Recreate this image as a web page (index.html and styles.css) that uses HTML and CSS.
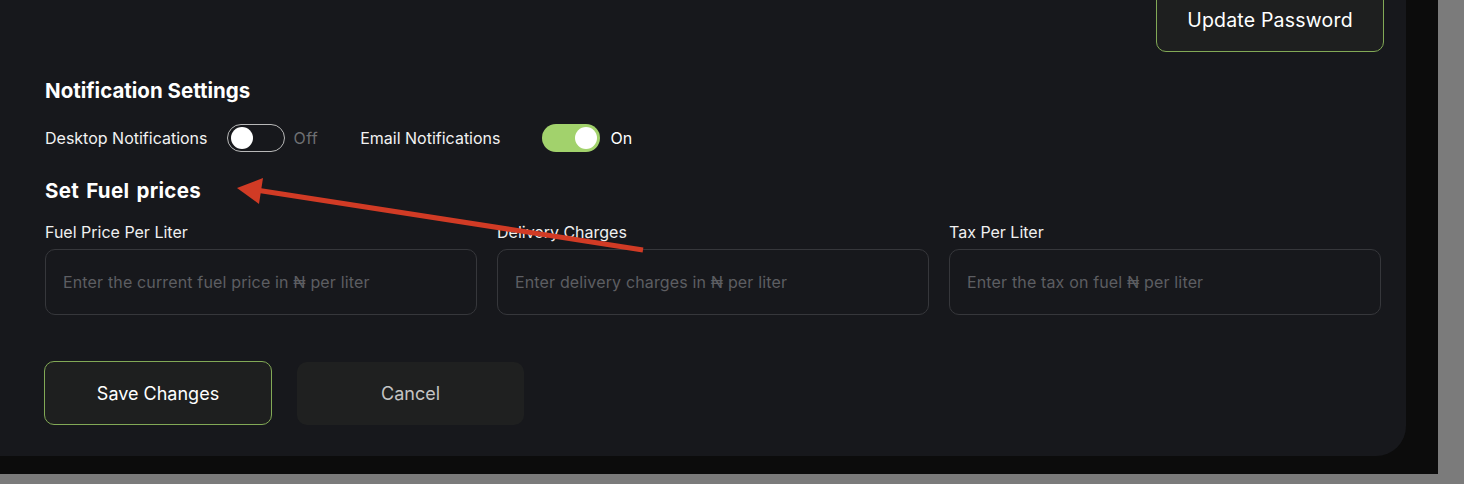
FILE: index.html
```html
<!DOCTYPE html>
<html>
<head>
<meta charset="utf-8">
<link rel="stylesheet" href="styles.css">
</head>
<body>
<div class="frame">
  <div class="card">
    <div class="top-row">
      <button class="btn btn-outline btn-top">Update Password</button>
    </div>
    <h2 class="heading h-notif">Notification Settings</h2>
    <div class="toggles">
      <span class="t-label">Desktop Notifications</span>
      <span class="switch off"><span class="knob"></span></span>
      <span class="state state-off">Off</span>
      <span class="t-label t-email">Email Notifications</span>
      <span class="switch on"><span class="knob"></span></span>
      <span class="state state-on">On</span>
    </div>
    <h2 class="heading h-fuel">Set Fuel prices</h2>
    <div class="fields">
      <div class="field">
        <label class="f-label">Fuel Price Per Liter</label>
        <div class="input">Enter the current fuel price in ₦ per liter</div>
      </div>
      <div class="field">
        <label class="f-label">Delivery Charges</label>
        <div class="input">Enter delivery charges in ₦ per liter</div>
      </div>
      <div class="field">
        <label class="f-label">Tax Per Liter</label>
        <div class="input">Enter the tax on fuel ₦ per liter</div>
      </div>
    </div>
    <div class="actions">
      <button class="btn btn-outline">Save Changes</button>
      <button class="btn btn-cancel">Cancel</button>
    </div>
  </div>
</div>
<svg class="arrow" width="1464" height="484" viewBox="0 0 1464 484">
  <line x1="643" y1="250" x2="256" y2="190" stroke="#d13b25" stroke-width="5"/>
  <polygon points="237,188 263,178 259,204" fill="#d13b25"/>
</svg>
</body>
</html>
```
FILE: styles.css
```css
* { box-sizing: border-box; }
html, body { margin: 0; padding: 0; }
body {
  background: #7b7b7b;
  font-family: Inter, "Noto Sans", "Liberation Sans", sans-serif;
  width: 1464px;
  height: 484px;
  overflow: hidden;
  position: relative;
}
.frame {
  width: 1438px;
  height: 474px;
  background: #0c0c0c;
}
.card {
  width: 1406px;
  height: 456px;
  background: #17181c;
  border-bottom-right-radius: 30px;
  padding: 0 24px 0 45px;
  color: #fff;
}
.top-row {
  display: flex;
  justify-content: flex-end;
  margin-right: -2px;
}
.btn {
  font-family: inherit;
  width: 228px;
  height: 64px;
  border-radius: 10px;
  font-size: 18px;
  color: #fff;
  background: #1e1f1f;
  border: 1px solid #82a956;
}
.btn-top {
  margin-top: -12px;
  font-size: 19.5px;
  letter-spacing: 0.2px;
}
.heading {
  margin: 0;
  font-size: 20.5px;
  line-height: 24px;
  font-weight: 700;
  letter-spacing: 0;
}
.h-notif { margin-top: 27px; }
.h-fuel { margin-top: 26px; word-spacing: 2px; letter-spacing: 0.3px; }
.toggles {
  display: flex;
  align-items: center;
  margin-top: 20px;
  height: 30px;
}
.t-label {
  font-size: 16px;
  color: #f2f2f2;
}
.t-email { margin-left: 42px; }
.switch {
  display: inline-flex;
  align-items: center;
  width: 58px;
  height: 28px;
  border-radius: 14px;
  margin-left: 19px;
  padding: 0 3px;
}
.switch.off {
  border: 1.5px solid #b8b8b8;
  background: transparent;
}
.switch.on {
  background: #a2d26c;
  justify-content: flex-end;
  margin-left: 42px;
}
.knob {
  width: 22px;
  height: 22px;
  border-radius: 50%;
  background: #fff;
}
.state {
  font-size: 16px;
  margin-left: 9px;
}
.state-off { color: #6e6f72; letter-spacing: 0.4px; }
.state-on { color: #fff; margin-left: 10px; }
.fields {
  display: grid;
  grid-template-columns: repeat(3, 1fr);
  gap: 20px;
  margin-top: 19px;
  margin-right: 1px;
}
.f-label {
  display: block;
  font-size: 16px;
  line-height: 20px;
  color: #f0f0f0;
}
.input {
  margin-top: 7px;
  height: 66px;
  border: 1px solid #36373b;
  border-radius: 10px;
  display: flex;
  align-items: center;
  padding-left: 17px;
  font-size: 16px;
  letter-spacing: 0.15px;
  color: #5d5e62;
}
.actions {
  display: flex;
  gap: 25px;
  margin-top: 46px;
  margin-left: -1px;
}
.btn-cancel {
  border: none;
  background: #1f2020;
  color: #c4c4c4;
  width: 227px;
  height: 63px;
  margin-top: 1px;
}
.arrow {
  position: absolute;
  left: 0;
  top: 0;
  pointer-events: none;
}
```
